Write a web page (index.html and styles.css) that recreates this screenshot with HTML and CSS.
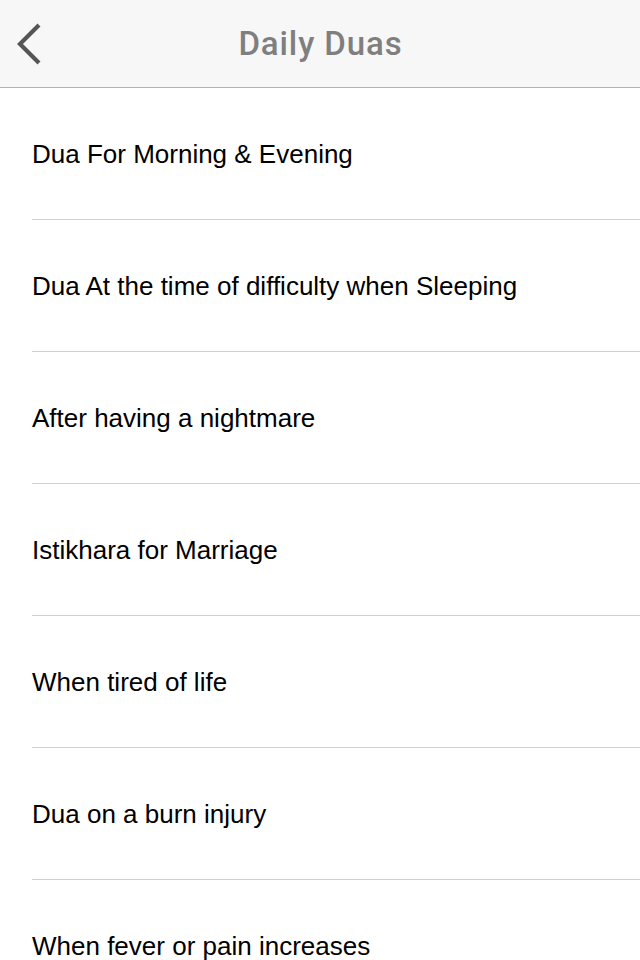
FILE: index.html
```html
<!DOCTYPE html>
<html>
<head>
<meta charset="utf-8">
<link rel="stylesheet" href="styles.css">
</head>
<body>
<header class="navbar">
  <button class="back" aria-label="Back">
    <svg width="32" height="44" viewBox="0 0 32 44"><path d="M24 3 L5 22 L24 41" fill="none" stroke="#555555" stroke-width="4.2" stroke-linecap="butt" stroke-linejoin="miter"/></svg>
  </button>
  <h1 class="title">Daily Duas</h1>
</header>
<ul class="list">
  <li class="row">Dua For Morning &amp; Evening</li>
  <li class="row">Dua At the time of difficulty when Sleeping</li>
  <li class="row">After having a nightmare</li>
  <li class="row">Istikhara for Marriage</li>
  <li class="row">When tired of life</li>
  <li class="row">Dua on a burn injury</li>
  <li class="row">When fever or pain increases</li>
</ul>
</body>
</html>
```
FILE: styles.css
```css
html, body {
  margin: 0;
  padding: 0;
  background: #ffffff;
  overflow: hidden;
}
body {
  width: 640px;
  height: 960px;
}
.navbar {
  position: relative;
  height: 87px;
  background: #f7f7f7;
  border-bottom: 1px solid #b2b2b2;
  display: flex;
  align-items: center;
  justify-content: center;
}
.back {
  position: absolute;
  left: 15px;
  top: 22px;
  width: 32px;
  height: 44px;
  padding: 0;
  border: 0;
  background: none;
  display: block;
}
.back svg {
  display: block;
}
.title {
  margin: 0;
  font-family: Roboto, "Noto Sans", sans-serif;
  font-weight: 500;
  font-size: 33px;
  letter-spacing: 0.9px;
  color: #7f7f7f;
  line-height: 1;
  padding-left: 1px;
}
.list {
  list-style: none;
  margin: 0;
  padding: 0 0 0 32px;
}
.row {
  height: 129px;
  padding-top: 2px;
  display: flex;
  align-items: center;
  border-bottom: 1px solid #d0d0d0;
  font-family: "Liberation Sans", Arial, sans-serif;
  font-size: 26px;
  color: #000000;
}
```
